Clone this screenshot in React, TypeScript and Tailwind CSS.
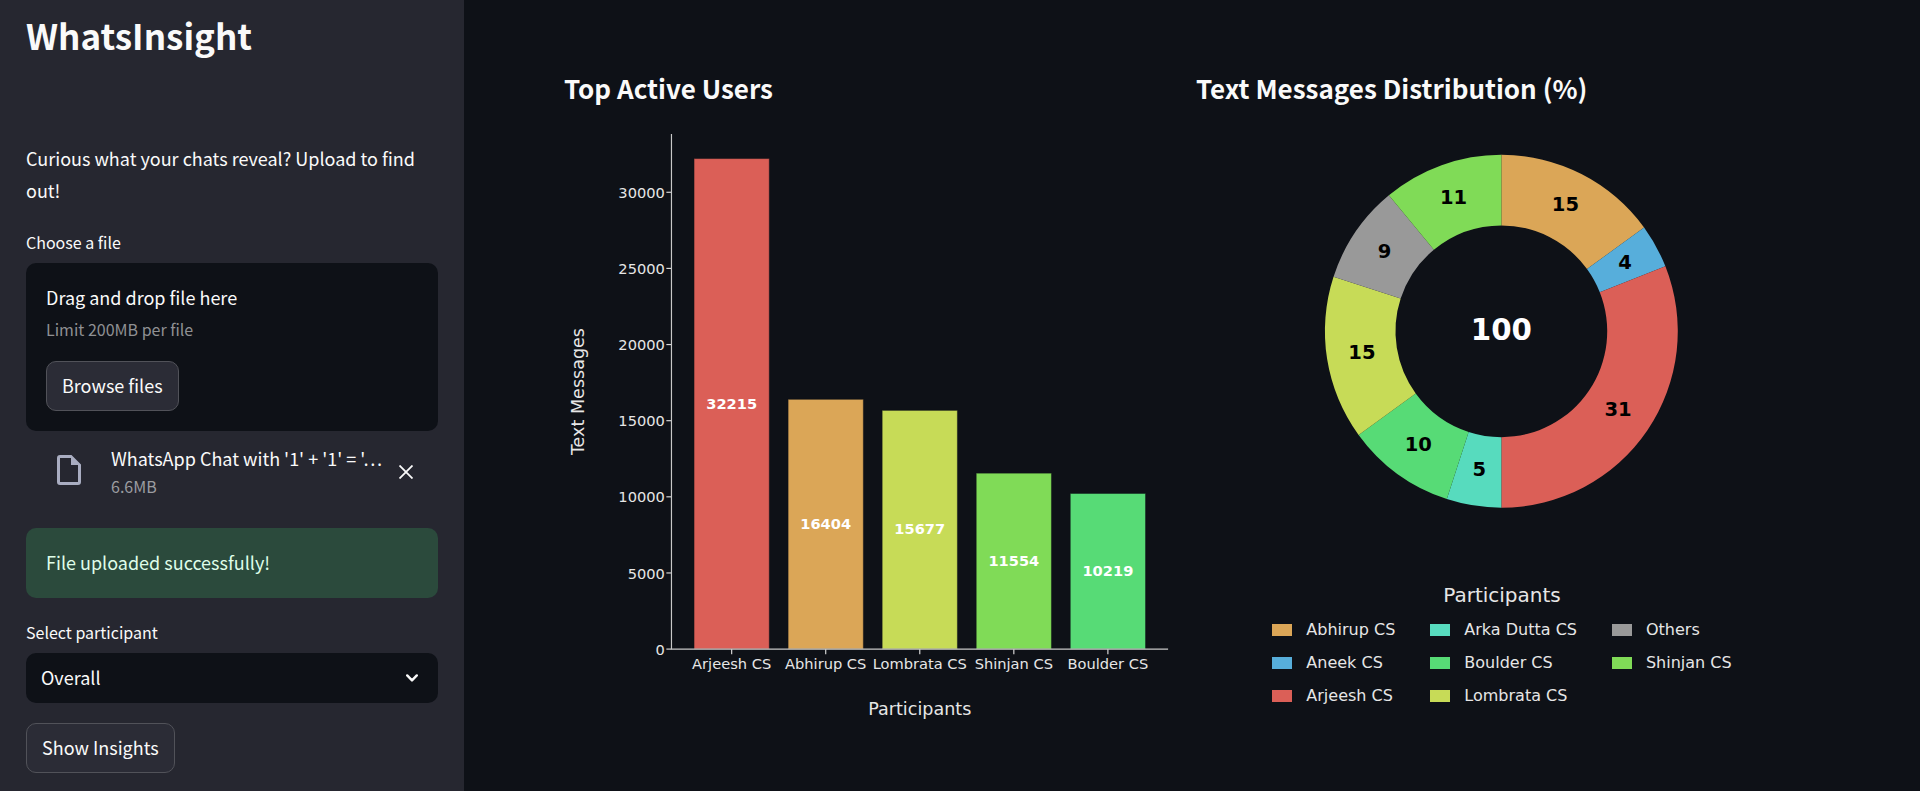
import { useRef } from "react";

const BAR_COLORS = ["#db5f57", "#dba657", "#c7db57", "#80db57", "#57db76"];

const bars = [
  { name: "Arjeesh CS", value: 32215 },
  { name: "Abhirup CS", value: 16404 },
  { name: "Lombrata CS", value: 15677 },
  { name: "Shinjan CS", value: 11554 },
  { name: "Boulder CS", value: 10219 },
];

const slices = [
  { name: "Abhirup CS", share: 15, color: "#dba657" },
  { name: "Aneek CS", share: 4, color: "#57aedb" },
  { name: "Arjeesh CS", share: 31, color: "#db5f57" },
  { name: "Arka Dutta CS", share: 5, color: "#57dbbe" },
  { name: "Boulder CS", share: 10, color: "#57db76" },
  { name: "Lombrata CS", share: 15, color: "#c7db57" },
  { name: "Others", share: 9, color: "#999999" },
  { name: "Shinjan CS", share: 11, color: "#80db57" },
];

function BarChart() {
  const left = 73.4;
  const right = 412.6;
  const top = 4.8;
  const bottom = 356.6;
  const scale = (bottom - top) / (32215 * 1.05);
  const pitch = (right - left) / 5.28;
  const barWidth = pitch * 0.8;
  const ticks = [0, 5000, 10000, 15000, 20000, 25000, 30000];
  const middle = (left + right) / 2;

  return (
    <svg
      viewBox="0 0 418 415"
      role="img"
      aria-label="Top active users by text messages"
      className="block w-full font-['DejaVu_Sans',sans-serif]"
    >
      {ticks.map((t) => {
        const y = bottom - t * scale;
        return (
          <g key={t}>
            <line x1={left - 3.5} x2={left} y1={y} y2={y} stroke="#d9d9d9" strokeWidth="0.8" />
            <text x={left - 4.5} y={y + 3.8} textAnchor="end" fontSize="10" fill="#e6e6e6">
              {t}
            </text>
          </g>
        );
      })}
      {bars.map((b, i) => {
        const x = left + pitch * (0.64 + i);
        const h = b.value * scale;
        return (
          <g key={b.name}>
            <rect
              x={x - barWidth / 2}
              y={bottom - h}
              width={barWidth}
              height={h}
              fill={BAR_COLORS[i]}
              stroke="#0e1117"
              strokeOpacity="0.45"
              strokeWidth="0.7"
            />
            <line x1={x} x2={x} y1={bottom} y2={bottom + 3.5} stroke="#d9d9d9" strokeWidth="0.8" />
            <text x={x} y={bottom - h / 2 + 3.2} textAnchor="middle" fontSize="10" fontWeight="bold" fill="#ffffff">
              {b.value}
            </text>
            <text x={x} y="369.9" textAnchor="middle" fontSize="10" fill="#e6e6e6">
              {b.name}
            </text>
          </g>
        );
      })}
      <path d={`M${left} ${top}V${bottom}H${right}`} fill="none" stroke="#c8c8c8" strokeWidth="0.8" />
      <text x={middle} y="401.6" textAnchor="middle" fontSize="12" fill="#e6e6e6">
        Participants
      </text>
      <text transform="translate(13.7 180.7) rotate(-90)" textAnchor="middle" fontSize="12" fill="#e6e6e6">
        Text Messages
      </text>
    </svg>
  );
}

function DonutChart() {
  const cx = 187.6;
  const cy = 125.5;
  const outer = 108.4;
  const inner = outer * 0.6;
  const point = (share: number, r: number) => {
    const a = (share / 100) * Math.PI * 2;
    return [cx + r * Math.sin(a), cy - r * Math.cos(a)];
  };
  let start = 0;
  const arcs = slices.map((s) => {
    const end = start + s.share;
    const [x1, y1] = point(start, outer);
    const [x2, y2] = point(end, outer);
    const [x3, y3] = point(end, inner);
    const [x4, y4] = point(start, inner);
    const [lx, ly] = point((start + end) / 2, outer * 0.8);
    start = end;
    return {
      ...s,
      lx,
      ly,
      d: `M${x1} ${y1}A${outer} ${outer} 0 0 1 ${x2} ${y2}L${x3} ${y3}A${inner} ${inner} 0 0 0 ${x4} ${y4}Z`,
    };
  });

  return (
    <svg
      viewBox="0 0 376 260"
      role="img"
      aria-label="Share of text messages by participant"
      className="block w-full font-['DejaVu_Sans',sans-serif]"
    >
      {arcs.map((a) => (
        <path key={a.name} d={a.d} fill={a.color} />
      ))}
      {arcs.map((a) => (
        <text key={a.name} x={a.lx} y={a.ly + 3.5} textAnchor="middle" fontSize="12" fontWeight="bold" fill="#000000">
          {a.share}
        </text>
      ))}
      <text x={cx} y={cy + 5.2} textAnchor="middle" fontSize="18" fontWeight="bold" fill="#ffffff">
        100
      </text>
    </svg>
  );
}

function Legend() {
  return (
    <div className="flex flex-col items-center font-['DejaVu_Sans',sans-serif] text-[#e6e6e6]">
      <p className="text-xl leading-7">Participants</p>
      <ul className="mt-1 grid grid-flow-col grid-rows-3 gap-x-[35px] text-base leading-[33px]">
        {slices.map((s) => (
          <li key={s.name} className="flex items-center gap-3.5">
            <svg className="h-3 w-5" viewBox="0 0 20 12" aria-hidden="true">
              <rect width="20" height="12" fill={s.color} />
            </svg>
            {s.name}
          </li>
        ))}
      </ul>
    </div>
  );
}

function Sidebar() {
  const fileInput = useRef<HTMLInputElement>(null);
  return (
    <aside className="w-[464px] shrink-0 bg-[#262730] px-[26px] pb-[18px]">
      <h1 className="pt-[11px] text-[35px] font-semibold leading-[48px]">WhatsInsight</h1>
      <p className="mt-[83px] text-lg leading-8">Curious what your chats reveal? Upload to find out!</p>

      <label htmlFor="chat-file" className="mt-6 block text-base leading-6">
        Choose a file
      </label>
      <input id="chat-file" ref={fileInput} type="file" className="hidden" />
      <div className="mt-[9px] rounded-[10px] bg-[#0e1117] px-5 pb-5 pt-[18px]">
        <p className="text-lg leading-8">Drag and drop file here</p>
        <p className="text-base leading-8 text-[#8f9093]">Limit 200MB per file</p>
        <button
          type="button"
          onClick={() => fileInput.current?.click()}
          className="mt-4 h-[50px] rounded-[10px] border border-[#515259] bg-[#2b2c36] px-[15px] pb-0.5 text-lg"
        >
          Browse files
        </button>
      </div>

      <div className="mt-[11px] flex items-center pl-[31px] pr-[25px]">
        <svg className="h-[30px] w-6 shrink-0" viewBox="0 0 24 30" aria-hidden="true">
          <path
            d="M3 0H14.5L24 9.5V27a3 3 0 0 1-3 3H3a3 3 0 0 1-3-3V3a3 3 0 0 1 3-3ZM3 3V27H21V10H14V3Z"
            fill="#a9adc1"
            fillRule="evenodd"
          />
        </svg>
        <div className="ml-[30px] min-w-0 flex-1">
          <p className="truncate text-lg leading-8">WhatsApp Chat with '1' + '1' = '…</p>
          <p className="text-base leading-6 text-[#9b9ca0]">6.6MB</p>
        </div>
        <button type="button" aria-label="Remove file" className="shrink-0 pt-1">
          <svg className="size-3.5" viewBox="0 0 14 14" fill="none" stroke="#fafafa" strokeWidth="1.8" aria-hidden="true">
            <path d="M0.5 0.5L13.5 13.5M13.5 0.5L0.5 13.5" />
          </svg>
        </button>
      </div>

      <div role="status" className="mt-[30px] rounded-[10px] bg-[#2b4a3c] px-5 pb-5 pt-[18px] text-lg leading-8 text-[#dffde9]">
        File uploaded successfully!
      </div>

      <label htmlFor="participant" className="mt-[22px] block text-base leading-6">
        Select participant
      </label>
      <div className="mt-[9px] grid items-center">
        <select
          id="participant"
          defaultValue="Overall"
          className="col-start-1 row-start-1 h-[50px] w-full appearance-none rounded-[10px] bg-[#0e1117] px-[15px] pb-0.5 text-lg"
        >
          <option>Overall</option>
        </select>
        <svg
          className="pointer-events-none col-start-1 row-start-1 mr-5 h-2 w-3 justify-self-end"
          viewBox="0 0 12 8"
          fill="none"
          stroke="#fafafa"
          strokeWidth="2.4"
          strokeLinecap="round"
          strokeLinejoin="round"
          aria-hidden="true"
        >
          <path d="M1.2 1.4L6 6.4L10.8 1.4" />
        </svg>
      </div>
      <button
        type="button"
        className="mt-5 h-[50px] rounded-[10px] border border-[#515259] bg-[#2b2c36] px-[15px] pb-0.5 text-lg"
      >
        Show Insights
      </button>
    </aside>
  );
}

export default function App() {
  return (
    <div className="flex min-h-screen bg-[#0e1117] font-['Noto_Sans_CJK_KR',sans-serif] text-[#fafafa]">
      <Sidebar />
      <main className="grid min-w-0 flex-1 grid-cols-2 content-start gap-5 pl-[100px] pr-28 pt-[68px]">
        <section>
          <h2 className="text-[26px] font-semibold leading-10">Top Active Users</h2>
          <div className="mt-[19px]">
            <BarChart />
          </div>
        </section>
        <section>
          <h2 className="text-[26px] font-semibold leading-10">Text Messages Distribution (%)</h2>
          <div className="mt-[19px]">
            <DonutChart />
          </div>
          <div className="mt-[31px]">
            <Legend />
          </div>
        </section>
      </main>
    </div>
  );
}
